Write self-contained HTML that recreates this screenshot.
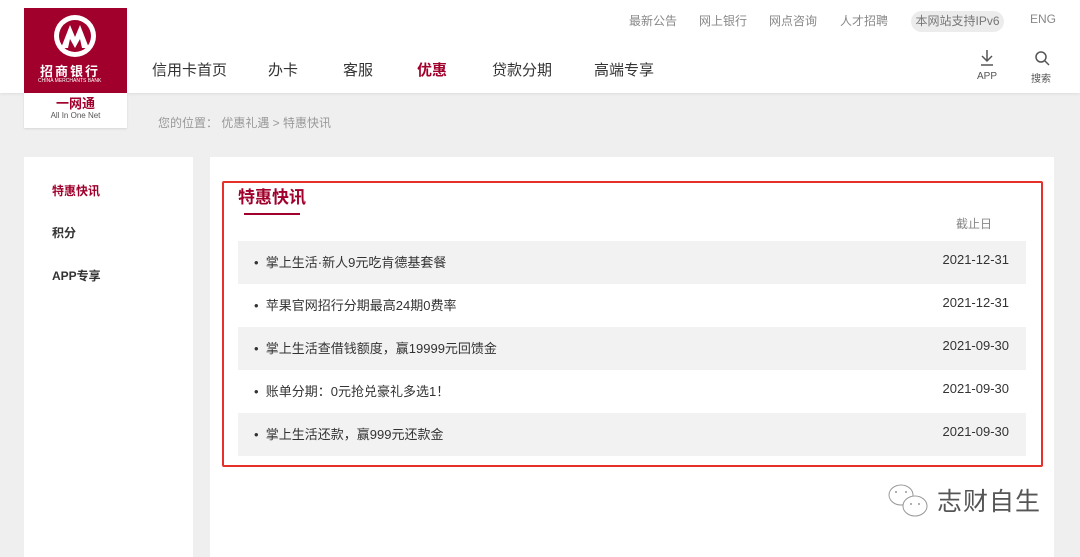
<!DOCTYPE html>
<html><head><meta charset="utf-8"><style>
*{margin:0;padding:0;box-sizing:border-box}
body{width:1080px;height:550px;overflow:hidden;background:#efefef;font-family:"Liberation Sans","Noto Sans CJK SC",sans-serif;position:relative;color:#333}
.hdr{position:absolute;left:0;top:0;width:1080px;height:93px;background:#fff;box-shadow:0 1px 3px rgba(0,0,0,.08)}
.abs{position:absolute;white-space:nowrap}
.logo{position:absolute;left:24px;top:8px;width:103px;height:85px;background:#a0002b}
.logo2{position:absolute;left:24px;top:93px;width:103px;height:35px;background:#fff;box-shadow:0 1px 2px rgba(0,0,0,.1);text-align:center}
.top{font-size:12px;color:#888;top:12px}
.nav{font-size:15px;color:#333;top:59px}
.side{position:absolute;left:24px;top:157px;width:169px;height:400px;background:#fff}
.side div{position:absolute;left:28px;font-size:12px;font-weight:bold;color:#333}
.main{position:absolute;left:210px;top:157px;width:844px;height:400px;background:#fff}
.box{position:absolute;left:222px;top:181px;width:821px;height:286px;border:2px solid #e8302a;border-radius:2px}
.row{position:absolute;left:238px;width:788px;height:43px;font-size:13px;color:#333}
.row.g{background:#f2f2f2}
.row .t{position:absolute;left:16px;top:11px}
.row .d{position:absolute;right:17px;top:11px}
</style></head><body>
<div class="hdr"></div>
<div class="logo">
<svg width="103" height="85" viewBox="0 0 103 85"><circle cx="51" cy="28" r="21" fill="#fff"/><circle cx="51" cy="28" r="16" fill="#a0002b"/><path d="M37 40 L46 17 L51 29 L56 17 L65 40 L58 40 L56 31 L51 40 L46 31 L44 40Z" fill="#fff"/></svg>
<div class="abs" style="left:16px;top:53px;font-size:13px;font-weight:bold;color:#fff;letter-spacing:2px">招商银行</div>
<div class="abs" style="left:14px;top:70px;font-size:5px;color:#fff">CHINA MERCHANTS BANK</div>
</div>
<div class="logo2"><div style="font-size:13px;color:#a0002b;font-weight:bold;margin-top:4px;line-height:14px">一网通</div><div style="font-size:8px;color:#555;line-height:10px">All In One Net</div></div>
<div class="abs top" style="left:629px">最新公告</div>
<div class="abs top" style="left:699px">网上银行</div>
<div class="abs top" style="left:769px">网点咨询</div>
<div class="abs top" style="left:840px">人才招聘</div>
<div class="abs" style="left:911px;top:11px;width:93px;height:21px;border-radius:11px;background:#ececec;font-size:12px;color:#777;text-align:center;line-height:21px">本网站支持IPv6</div>
<div class="abs top" style="left:1030px">ENG</div>
<div class="abs nav" style="left:152px">信用卡首页</div>
<div class="abs nav" style="left:268px">办卡</div>
<div class="abs nav" style="left:343px">客服</div>
<div class="abs nav" style="left:417px;color:#a0002b;font-weight:bold">优惠</div>
<div class="abs nav" style="left:492px">贷款分期</div>
<div class="abs nav" style="left:594px">高端专享</div>
<svg class="abs" style="left:979px;top:49px" width="16" height="18" viewBox="0 0 16 18"><path d="M8 1v11M3 7l5 5 5-5M2 16h12" stroke="#555" stroke-width="1.5" fill="none"/></svg>
<div class="abs" style="left:977px;top:71px;font-size:10px;color:#555">APP</div>
<svg class="abs" style="left:1034px;top:50px" width="16" height="16" viewBox="0 0 16 16"><circle cx="7" cy="7" r="5" stroke="#555" stroke-width="1.5" fill="none"/><path d="M11 11l4 4" stroke="#555" stroke-width="1.5"/></svg>
<div class="abs" style="left:1031px;top:70px;font-size:10px;color:#555">搜索</div>
<div class="abs" style="left:158px;top:114px;font-size:12px;color:#999">您的位置： 优惠礼遇 &gt; 特惠快讯</div>
<div class="side"><div style="top:25px;color:#a0002b">特惠快讯</div><div style="top:67px">积分</div><div style="top:110px">APP专享</div></div>
<div class="main"></div>
<div class="abs" style="left:238px;top:183px;font-size:17px;font-weight:bold;color:#a0002b">特惠快讯</div>
<div class="abs" style="left:244px;top:213px;width:56px;height:2px;background:#a0002b"></div>
<div class="abs" style="left:956px;top:215px;font-size:12px;color:#888">截止日</div>
<div class="box"></div>
<div class="row g" style="top:241px"><span class="t">•&nbsp; 掌上生活·新人9元吃肯德基套餐</span><span class="d">2021-12-31</span></div>
<div class="row" style="top:284px"><span class="t">•&nbsp; 苹果官网招行分期最高24期0费率</span><span class="d">2021-12-31</span></div>
<div class="row g" style="top:327px"><span class="t">•&nbsp; 掌上生活查借钱额度，赢19999元回馈金</span><span class="d">2021-09-30</span></div>
<div class="row" style="top:370px"><span class="t">•&nbsp; 账单分期：0元抢兑豪礼多选1！</span><span class="d">2021-09-30</span></div>
<div class="row g" style="top:413px"><span class="t">•&nbsp; 掌上生活还款，赢999元还款金</span><span class="d">2021-09-30</span></div>
<svg class="abs" style="left:887px;top:482px" width="44" height="38" viewBox="0 0 44 38"><ellipse cx="14" cy="13" rx="12" ry="10" fill="none" stroke="#999" stroke-width="1"/><ellipse cx="28" cy="24" rx="12" ry="10" fill="#fff" stroke="#999" stroke-width="1"/><circle cx="9" cy="10" r="1" fill="#999"/><circle cx="19" cy="10" r="1" fill="#999"/><circle cx="24" cy="22" r="1" fill="#999"/><circle cx="32" cy="22" r="1" fill="#999"/></svg>
<div class="abs" style="left:937px;top:482px;font-size:25px;color:#555;letter-spacing:1px">志财自生</div>
</body></html>
